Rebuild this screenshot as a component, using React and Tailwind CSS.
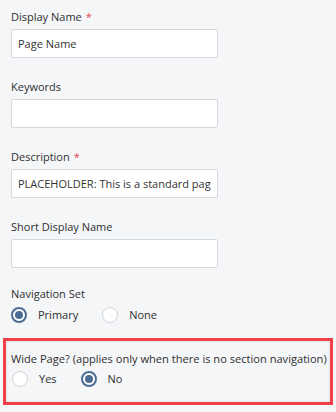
import { useState } from "react";

function Field({ label, required, value = "" }) {
  return (
    <div className="mb-[21px]">
      <div className="h-4 leading-4 text-[11px] mb-1">
        {label}
        {required && <span className="text-[#e0474f] ml-1">*</span>}
      </div>
      <input
        readOnly
        value={value}
        className="block w-[207px] h-[29px] bg-white border border-[#d5d8dc] rounded-[2px] px-[6px] text-[11px] text-[#333] outline-none"
      />
    </div>
  );
}

function Radio({ checked, label, onClick }) {
  return (
    <button onClick={onClick} className="flex items-center gap-[11px] h-4">
      {checked ? (
        <span className="w-4 h-4 rounded-full border-2 border-[#4b6c94] bg-white flex items-center justify-center">
          <span className="w-2 h-2 rounded-full bg-[#4b6c94]"></span>
        </span>
      ) : (
        <span className="w-4 h-4 rounded-full border border-[#d0d4d8] bg-white"></span>
      )}
      <span className="text-[11px] leading-4">{label}</span>
    </button>
  );
}

export default function App() {
  const [nav, setNav] = useState("primary");
  const [wide, setWide] = useState("no");

  return (
    <div
      className="w-[336px] h-[412px] bg-[#f5f6f8] text-[#2f2f2f] pt-[9px] overflow-hidden"
      style={{ fontFamily: '"Open Sans", sans-serif' }}
    >
      <div className="px-[11px]">
        <Field label="Display Name" required value="Page Name" />
        <Field label="Keywords" />
        <Field label="Description" required value="PLACEHOLDER: This is a standard page." />
        <Field label="Short Display Name" />

        <div className="h-4 leading-4 text-[11px] -mt-[3px]">Navigation Set</div>
        <div className="flex gap-[24px] mt-[5px]">
          <Radio checked={nav === "primary"} label="Primary" onClick={() => setNav("primary")} />
          <Radio checked={nav === "none"} label="None" onClick={() => setNav("none")} />
        </div>
      </div>

      <div className="mx-[3px] mt-[15px] w-[330px] h-[67px] border-[3px] border-[#ef4047] shadow-[inset_0_0_3px_rgba(0,0,0,0.15)] pl-[5px] pt-[10px]">
        <div className="h-4 leading-4 text-[11.1px] whitespace-nowrap">
          Wide Page? (applies only when there is no section navigation)
        </div>
        <div className="flex gap-[24px] mt-[4px] pl-[1px]">
          <Radio checked={wide === "yes"} label="Yes" onClick={() => setWide("yes")} />
          <Radio checked={wide === "no"} label="No" onClick={() => setWide("no")} />
        </div>
      </div>
    </div>
  );
}
